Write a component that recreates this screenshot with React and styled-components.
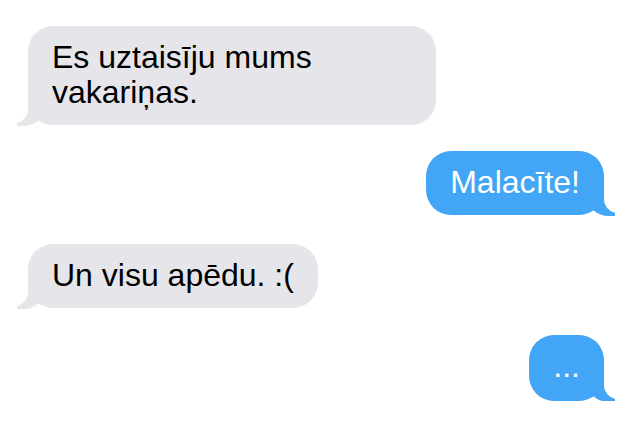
import React from "react";
import styled, { createGlobalStyle, css } from "styled-components";

const GlobalStyle = createGlobalStyle`
  html, body { margin: 0; padding: 0; background: #ffffff; }
  body { font-family: "Liberation Sans", Arial, Helvetica, sans-serif; }
`;

const Thread = styled.div`
  display: flex;
  flex-direction: column;
  padding: 26px 31px 0 28px;
  width: 635px;
  box-sizing: border-box;
`;

const GRAY = "#e5e5ea";
const BLUE = "#42a5f5";

const Bubble = styled.p`
  position: relative;
  margin: 0 0 ${(p) => p.$gap ?? 27}px 0;
  box-sizing: border-box;
  max-width: 408px;
  padding: 14px 24px ${(p) => p.$padBottom ?? 15}px;
  border-radius: 25px;
  font-size: 32px;
  line-height: 35px;
  word-wrap: break-word;

  &::before,
  &::after {
    content: "";
    position: absolute;
    bottom: 0;
    height: 26px;
  }

  ${(p) =>
    p.$me
      ? css`
          align-self: flex-end;
          background: ${BLUE};
          color: #ffffff;
          &::before {
            right: -11px;
            border-right: 28px solid ${BLUE};
            border-bottom-left-radius: 22px 20px;
            transform: translateY(1px);
          }
          &::after {
            right: -18px;
            width: 18px;
            background: #ffffff;
            border-bottom-left-radius: 14px;
            transform: translateY(-2px);
          }
        `
      : css`
          align-self: flex-start;
          background: ${GRAY};
          color: #000000;
          &::before {
            left: -11px;
            border-left: 28px solid ${GRAY};
            border-bottom-right-radius: 22px 20px;
            transform: translateY(1px);
          }
          &::after {
            left: -18px;
            width: 18px;
            background: #ffffff;
            border-bottom-right-radius: 14px;
            transform: translateY(-2px);
          }
        `}
`;

const messages = [
  { me: false, text: "Es uztaisīju mums vakariņas.", gap: 26 },
  { me: true, text: "Malacīte!", gap: 29 },
  { me: false, text: "Un visu apēdu. :(", gap: 27 },
  { me: true, text: "...", gap: 0, padBottom: 17 },
];

export default function App() {
  return (
    <>
      <GlobalStyle />
      <Thread>
        {messages.map((m, i) => (
          <Bubble key={i} $me={m.me} $gap={m.gap} $padBottom={m.padBottom}>
            {m.text}
          </Bubble>
        ))}
      </Thread>
    </>
  );
}
